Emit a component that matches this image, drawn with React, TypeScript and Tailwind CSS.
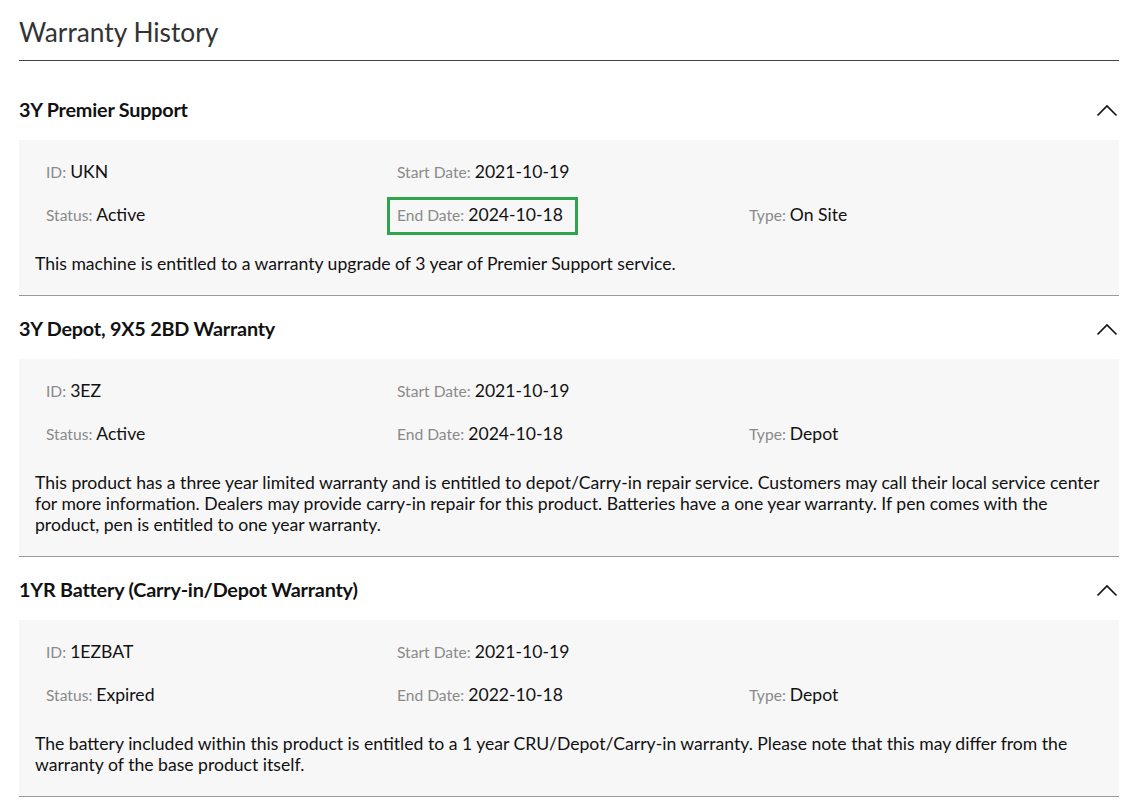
import { ReactNode } from 'react';

interface Warranty {
  name: string;
  id: string;
  status: string;
  start: string;
  end: string;
  type?: string;
  description: string;
  highlightEnd?: boolean;
}

const warranties: Warranty[] = [
  {
    name: '3Y Premier Support',
    id: 'UKN',
    status: 'Active',
    start: '2021-10-19',
    end: '2024-10-18',
    type: 'On Site',
    description: 'This machine is entitled to a warranty upgrade of 3 year of Premier Support service.',
    highlightEnd: true,
  },
  {
    name: '3Y Depot, 9X5 2BD Warranty',
    id: '3EZ',
    status: 'Active',
    start: '2021-10-19',
    end: '2024-10-18',
    type: 'Depot',
    description:
      'This product has a three year limited warranty and is entitled to depot/Carry-in repair service. Customers may call their local service center for more information. Dealers may provide carry-in repair for this product. Batteries have a one year warranty. If pen comes with the product, pen is entitled to one year warranty.',
  },
  {
    name: '1YR Battery (Carry-in/Depot Warranty)',
    id: '1EZBAT',
    status: 'Expired',
    start: '2021-10-19',
    end: '2022-10-18',
    type: 'Depot',
    description:
      'The battery included within this product is entitled to a 1 year CRU/Depot/Carry-in warranty. Please note that this may differ from the warranty of the base product itself.',
  },
];

function Field({ label, value, children }: { label: string; value: string; children?: ReactNode }) {
  return (
    <span className="relative inline-flex h-[22px] items-baseline leading-[22px] whitespace-nowrap">
      <span className="text-[15.6px] text-[#8a8a8a]">{label}:</span>
      <span className="ml-[4px] text-[17.6px] text-[#111]">{value}</span>
      {children}
    </span>
  );
}

function ChevronUp() {
  return (
    <svg width="22" height="13" viewBox="0 0 22 13" fill="none">
      <polyline points="1.5,11.5 11,2 20.5,11.5" stroke="#111" strokeWidth="1.6" />
    </svg>
  );
}

function WarrantySection({ w, first }: { w: Warranty; first?: boolean }) {
  return (
    <section className={first ? 'mt-[16px]' : ''}>
      {/* Header */}
      <div className="flex h-[63px] items-center justify-between pt-[3px]">
        <h3 className="text-[19.8px] font-bold text-[#111] tracking-[-0.2px]">{w.name}</h3>
        <span className="mr-[1px] flex">
          <ChevronUp />
        </span>
      </div>

      {/* Details */}
      <div className="border-b border-[#9a9a9a] bg-[#f7f7f7] px-[16px] pt-[21px] pb-[21px]">
        <div className="grid grid-cols-[351px_352px_1fr] auto-rows-[22px] gap-y-[21px] pl-[11px] leading-[22px]">
          <div className="flex h-[22px]">
            <Field label="ID" value={w.id} />
          </div>
          <div className="flex h-[22px]">
            <Field label="Start Date" value={w.start} />
          </div>
          <div />
          <div className="flex h-[22px]">
            <Field label="Status" value={w.status} />
          </div>
          <div className="flex h-[22px]">
            <Field label="End Date" value={w.end}>
              {w.highlightEnd && (
                <span className="pointer-events-none absolute -top-[7px] -bottom-[9px] -left-[10px] -right-[15px] border-[3px] border-[#2ea44f]" />
              )}
            </Field>
          </div>
          <div className="flex h-[22px]">{w.type && <Field label="Type" value={w.type} />}</div>
        </div>
        <p className="mt-[27px] text-[17.6px] leading-[21px] text-[#111]">{w.description}</p>
      </div>
    </section>
  );
}

export default function App() {
  return (
    <div className="min-h-screen bg-white px-[19px] pt-[14px] font-['Lato','Liberation_Sans',sans-serif] text-[#111]" style={{ width: 1138 }}>
      <h2 className="h-[46px] text-[26.3px] leading-[36px] text-[#333]">Warranty History</h2>
      <div className="border-t border-[#444]" />
      {warranties.map((w, i) => (
        <WarrantySection key={w.name} w={w} first={i === 0} />
      ))}
    </div>
  );
}
